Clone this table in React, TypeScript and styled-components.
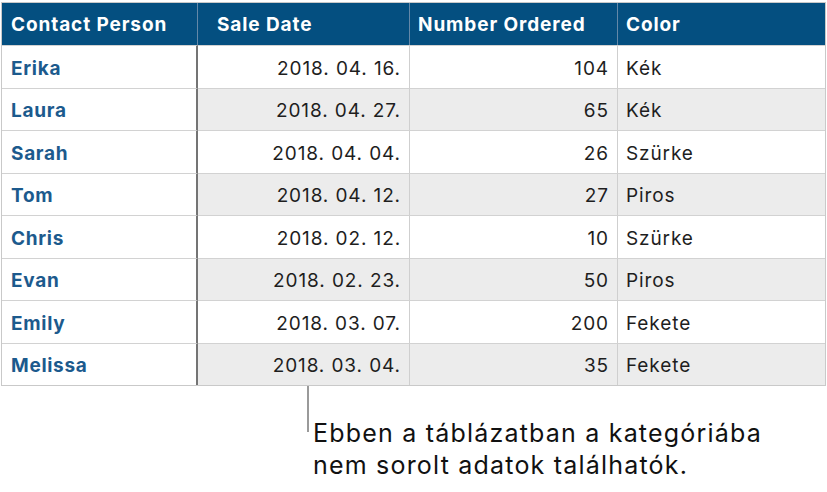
import React from "react";
import styled, { createGlobalStyle } from "styled-components";

const Global = createGlobalStyle`
  html, body { margin: 0; padding: 0; background: #ffffff; }
  body { font-family: Inter, "DejaVu Sans", sans-serif; }
`;

const Page = styled.div`
  width: 827px;
  height: 492px;
  padding: 2px 0 0 1px;
  box-sizing: border-box;
  overflow: hidden;
`;

const Table = styled.div`
  display: grid;
  grid-template-columns: 196px 212px 208px 207px;
  grid-template-rows: 42px repeat(8, 42.5px);
  width: 823px;
  border: 1px solid #c9c9c9;
`;

const HeadCell = styled.div<{ $pad: number; $last?: boolean }>`
  display: flex;
  align-items: center;
  background: #044f80;
  color: #ffffff;
  font-weight: 700;
  font-size: 19px;
  letter-spacing: 0.9px;
  padding-left: ${(p) => p.$pad}px;
  border-right: ${(p) => (p.$last ? "none" : "1px solid #6488a8")};
  box-sizing: border-box;
  white-space: nowrap;
`;

const Cell = styled.div<{
  $align: "left" | "right";
  $shade: boolean;
  $kind: "name" | "plain";
  $divider: "strong" | "light" | "none";
}>`
  display: flex;
  align-items: center;
  justify-content: ${(p) => (p.$align === "right" ? "flex-end" : "flex-start")};
  padding: 3px ${(p) => (p.$align === "right" ? "8px" : "0")} 0
    ${(p) => (p.$align === "left" ? (p.$kind === "name" ? "9px" : "8px") : "0")};
  background: ${(p) => (p.$shade ? "#ececec" : "#ffffff")};
  border-top: 1px solid #d2d2d2;
  border-right: ${(p) =>
    p.$divider === "strong"
      ? "2px solid #747474"
      : p.$divider === "light"
      ? "1px solid #cfcfcf"
      : "none"};
  box-sizing: border-box;
  font-size: 19px;
  letter-spacing: ${(p) => (p.$kind === "name" ? "0.7px" : "0.9px")};
  font-weight: ${(p) => (p.$kind === "name" ? 700 : 400)};
  color: ${(p) => (p.$kind === "name" ? "#1c5a8d" : "#1e1e1e")};
  white-space: nowrap;
`;

const Callout = styled.div`
  display: flex;
  align-items: flex-start;
  padding-left: 306px;
`;

const Leader = styled.div`
  width: 2px;
  height: 46px;
  background: #9a9a9a;
  flex: none;
`;

const Note = styled.div`
  margin: 31px 0 0 4px;
  font-size: 25px;
  line-height: 32px;
  letter-spacing: 1.2px;
  color: #111111;
`;

type Row = { name: string; date: string; num: number; color: string };

const rows: Row[] = [
  { name: "Erika", date: "2018. 04. 16.", num: 104, color: "Kék" },
  { name: "Laura", date: "2018. 04. 27.", num: 65, color: "Kék" },
  { name: "Sarah", date: "2018. 04. 04.", num: 26, color: "Szürke" },
  { name: "Tom", date: "2018. 04. 12.", num: 27, color: "Piros" },
  { name: "Chris", date: "2018. 02. 12.", num: 10, color: "Szürke" },
  { name: "Evan", date: "2018. 02. 23.", num: 50, color: "Piros" },
  { name: "Emily", date: "2018. 03. 07.", num: 200, color: "Fekete" },
  { name: "Melissa", date: "2018. 03. 04.", num: 35, color: "Fekete" },
];

export default function App() {
  return (
    <>
      <Global />
      <Page>
        <Table>
          <HeadCell $pad={9}>Contact Person</HeadCell>
          <HeadCell $pad={19}>Sale Date</HeadCell>
          <HeadCell $pad={8}>Number Ordered</HeadCell>
          <HeadCell $pad={8} $last>
            Color
          </HeadCell>
          {rows.map((r, i) => {
            const shade = i % 2 === 1;
            return (
              <React.Fragment key={r.name}>
                <Cell $align="left" $shade={false} $kind="name" $divider="strong">
                  {r.name}
                </Cell>
                <Cell $align="right" $shade={shade} $kind="plain" $divider="light">
                  {r.date}
                </Cell>
                <Cell $align="right" $shade={shade} $kind="plain" $divider="light">
                  {r.num}
                </Cell>
                <Cell $align="left" $shade={shade} $kind="plain" $divider="none">
                  {r.color}
                </Cell>
              </React.Fragment>
            );
          })}
        </Table>
        <Callout>
          <Leader />
          <Note>
            Ebben a táblázatban a kategóriába
            <br />
            nem sorolt adatok találhatók.
          </Note>
        </Callout>
      </Page>
    </>
  );
}
